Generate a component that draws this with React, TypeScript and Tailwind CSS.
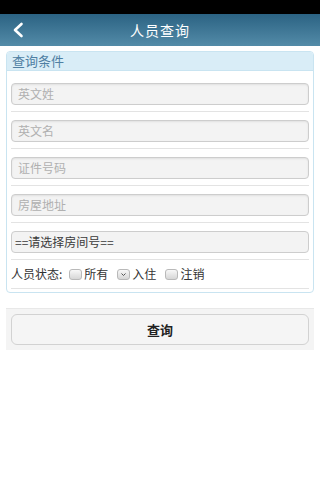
import React from "react";

const font = { fontFamily: '"Noto Sans CJK SC", "Noto Sans", sans-serif' };

function Field({ placeholder }: { placeholder: string }) {
  return (
    <>
      <div className="h-[22px] rounded-[4px] border border-[#cdcdcd] bg-[#f3f3f3] px-[6px] flex items-center text-[12px] text-[#b0b0b0] shadow-[inset_0_1px_2px_rgba(0,0,0,0.08)]">
        {placeholder}
      </div>
      <div className="mt-[6px] mb-[8px] h-px bg-[#e3e3e3]" />
    </>
  );
}

function Check({ mark }: { mark?: boolean }) {
  return (
    <span className="inline-flex h-[11px] w-[13px] items-center justify-center rounded-[3px] border border-[#b9b9b9] bg-gradient-to-b from-[#f8f8f8] to-[#d6d6d6]">
      {mark && (
        <svg width="7" height="5" viewBox="0 0 7 5">
          <path d="M1.5 1.5 L3.5 3.5 L5.5 1.5" fill="none" stroke="#555" strokeWidth="1" />
        </svg>
      )}
    </span>
  );
}

export default function App() {
  return (
    <div className="w-[320px] h-[480px] bg-white" style={font}>
      <div className="h-[14px] bg-black" />
      <div className="relative h-[32px] bg-gradient-to-b from-[#2b6383] to-[#538ba8] flex items-center justify-center">
        <svg className="absolute left-[12px] top-[8px]" width="12" height="16" viewBox="0 0 12 16">
          <path d="M9.5 2 L3 8 L9.5 14" fill="none" stroke="#fff" strokeWidth="2.6" strokeLinecap="round" strokeLinejoin="round" />
        </svg>
        <span className="text-[14px] text-white tracking-[1px]">人员查询</span>
      </div>

      <div className="mx-[6px] mt-[5px] rounded-[4px] border border-[#c9e4f1] overflow-hidden">
        <div className="h-[19px] bg-[#d9edf7] border-b border-[#c9e4f1] px-[5px] flex items-center text-[13px] text-[#4f7fa3]">
          查询条件
        </div>
        <div className="px-[4px] pt-[12px] pb-[3px]">
          <Field placeholder="英文姓" />
          <Field placeholder="英文名" />
          <Field placeholder="证件号码" />
          <Field placeholder="房屋地址" />
          <div className="h-[22px] rounded-[4px] border border-[#cdcdcd] bg-[#f3f3f3] px-[3px] flex items-center text-[12px] text-[#3a3a3a]">
            ==请选择房间号==
          </div>
          <div className="mt-[6px] h-px bg-[#e3e3e3]" />
          <div className="h-[28px] flex items-center text-[12px] text-[#333]">
            <span>人员状态:</span>
            <span className="ml-[7px] flex items-center gap-[2px]">
              <Check />
              <span>所有</span>
            </span>
            <span className="ml-[9px] flex items-center gap-[2px]">
              <Check mark />
              <span>入住</span>
            </span>
            <span className="ml-[9px] flex items-center gap-[2px]">
              <Check />
              <span>注销</span>
            </span>
          </div>
          <div className="h-px bg-[#e3e3e3]" />
        </div>
      </div>

      <div className="mx-[6px] mt-[15px] bg-[#f4f4f4] border-t border-[#e8e8e8] px-[5px] py-[5px]">
        <div className="h-[31px] rounded-[6px] border border-[#d2d2d2] bg-[#f5f5f5] flex items-center justify-center text-[13px] font-bold text-[#222]">
          查询
        </div>
      </div>
    </div>
  );
}
